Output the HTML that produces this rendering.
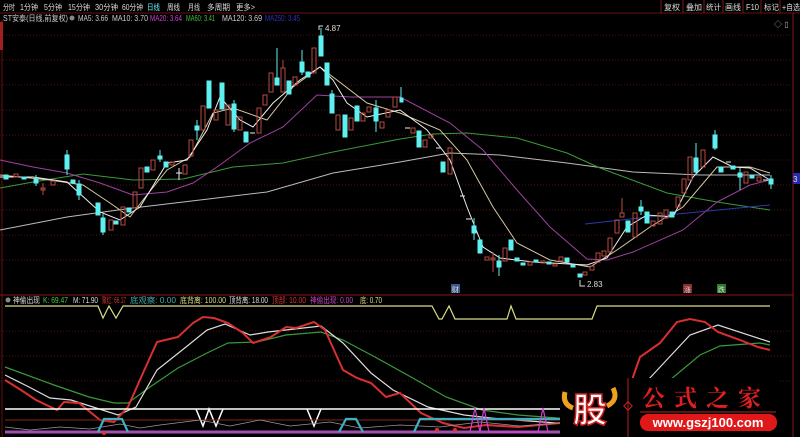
<!DOCTYPE html>
<html><head><meta charset="utf-8"><style>
body{margin:0;background:#000;width:800px;height:437px;overflow:hidden;font-family:"Liberation Sans","Noto Sans CJK SC",sans-serif}
svg{position:absolute;left:0;top:0}
</style></head><body>
<svg width="800" height="437" viewBox="0 0 800 437" xmlns="http://www.w3.org/2000/svg" font-family="Liberation Sans, Noto Sans CJK SC, sans-serif">
<rect width="800" height="437" fill="#000"/>
<!-- top bar -->
<g font-size="8" fill="#ddd" lengthAdjust="spacingAndGlyphs">
<text x="3" y="10" textLength="12" lengthAdjust="spacingAndGlyphs">分时</text>
<text x="20" y="10" textLength="18" lengthAdjust="spacingAndGlyphs">1分钟</text>
<text x="44" y="10" textLength="18" lengthAdjust="spacingAndGlyphs">5分钟</text>
<text x="68" y="10" textLength="22" lengthAdjust="spacingAndGlyphs">15分钟</text>
<text x="95" y="10" textLength="23" lengthAdjust="spacingAndGlyphs">30分钟</text>
<text x="122" y="10" textLength="21" lengthAdjust="spacingAndGlyphs">60分钟</text>
<text x="147" y="10" textLength="13" lengthAdjust="spacingAndGlyphs" fill="#6ee">日线</text>
<text x="167" y="10" textLength="13" lengthAdjust="spacingAndGlyphs">周线</text>
<text x="188" y="10" textLength="12" lengthAdjust="spacingAndGlyphs">月线</text>
<text x="207" y="10" textLength="23" lengthAdjust="spacingAndGlyphs">多周期</text>
<text x="236" y="10" textLength="19" lengthAdjust="spacingAndGlyphs">更多&gt;</text>
</g>
<line x1="0" y1="13" x2="800" y2="13" stroke="#6a1010"/>
<g stroke="#7a1a1a" fill="none">
<line x1="661" y1="0" x2="661" y2="13"/><line x1="683" y1="0" x2="683" y2="13"/><line x1="704" y1="0" x2="704" y2="13"/><line x1="723" y1="0" x2="723" y2="13"/><line x1="743" y1="0" x2="743" y2="13"/><line x1="761" y1="0" x2="761" y2="13"/><line x1="780" y1="0" x2="780" y2="13"/>
</g>
<g font-size="8" fill="#ddd">
<text x="664" y="10" textLength="16" lengthAdjust="spacingAndGlyphs">复权</text>
<text x="686" y="10" textLength="16" lengthAdjust="spacingAndGlyphs">叠加</text>
<text x="706" y="10" textLength="15" lengthAdjust="spacingAndGlyphs">统计</text>
<text x="725" y="10" textLength="16" lengthAdjust="spacingAndGlyphs">画线</text>
<text x="746" y="10" textLength="13" lengthAdjust="spacingAndGlyphs">F10</text>
<text x="764" y="10" textLength="15" lengthAdjust="spacingAndGlyphs">标记</text>
<text x="782" y="10" textLength="18" lengthAdjust="spacingAndGlyphs">+自选</text>
</g>
<!-- legend -->
<g font-size="8" fill="#ccc">
<text x="3" y="21" textLength="65" lengthAdjust="spacingAndGlyphs">ST安泰(日线,前复权)</text>
<circle cx="72" cy="18" r="2.5" fill="#888"/>
<text x="78" y="21" textLength="30" lengthAdjust="spacingAndGlyphs">MA5: 3.66</text>
<text x="112" y="21" textLength="36" lengthAdjust="spacingAndGlyphs">MA10: 3.70</text>
<text x="150" y="21" textLength="32" lengthAdjust="spacingAndGlyphs" fill="#d040d0">MA20: 3.64</text>
<text x="186" y="21" textLength="29" lengthAdjust="spacingAndGlyphs" fill="#40c040">MA60: 3.41</text>
<text x="222" y="21" textLength="40" lengthAdjust="spacingAndGlyphs">MA120: 3.69</text>
<text x="265" y="21" textLength="35" lengthAdjust="spacingAndGlyphs" fill="#3030c0">MA250: 3.45</text>
</g>
<!-- grid -->
<g stroke="#4a1010" stroke-dasharray="1 2">
<line x1="0" y1="35" x2="792" y2="35"/><line x1="0" y1="60" x2="792" y2="60"/><line x1="0" y1="85" x2="792" y2="85"/><line x1="0" y1="110" x2="792" y2="110"/><line x1="0" y1="135" x2="792" y2="135"/><line x1="0" y1="160" x2="792" y2="160"/><line x1="0" y1="185" x2="792" y2="185"/><line x1="0" y1="210" x2="792" y2="210"/><line x1="0" y1="235" x2="792" y2="235"/><line x1="0" y1="260" x2="792" y2="260"/>
<line x1="0" y1="331" x2="792" y2="331"/><line x1="0" y1="356" x2="792" y2="356"/><line x1="0" y1="381" x2="792" y2="381"/>
</g>
<line x1="793" y1="13" x2="793" y2="437" stroke="#8a1515"/>
<line x1="2" y1="20" x2="2" y2="437" stroke="#6a1010"/>
<rect x="0" y="22" width="3" height="28" fill="#a02020"/>
<line x1="0" y1="295" x2="793" y2="295" stroke="#8a1515"/>
<!-- MA lines -->
<g fill="none" stroke-width="1">
<polyline stroke="#bbb" points="0,230 67,217 133,208 200,200 267,192 333,173 400,162 450,153 500,155 567,163 633,172 700,175 770,175"/>
<polyline stroke="#3a9a3a" points="0,188 33,182 83,174 133,180 183,179 233,167 283,163 333,152 400,139 433,134 467,133 517,138 567,153 600,168 667,193 717,202 770,210"/>
<polyline stroke="#a040a0" points="0,160 33,167 67,173 100,183 133,195 167,192 193,183 217,167 250,143 283,127 317,95 350,97 400,97 450,123 483,150 517,190 550,227 587,259 607,260 633,252 683,230 717,202 750,185 770,180"/>
<polyline stroke="#2a3ab0" points="585,224 667,215 770,205"/>
<polyline stroke="#d8c8a0" points="0,175 50,180 83,185 110,203 130,217 143,200 167,170 190,157 213,113 233,108 267,120 293,87 320,67 333,77 367,103 400,113 440,130 467,160 493,207 517,243 550,260 590,267 617,250 650,227 683,207 717,167 750,167 770,173"/>
<polyline stroke="#eee" points="0,177 33,177 67,182 100,212 120,220 140,207 167,163 187,160 207,130 220,97 240,120 253,127 273,103 300,80 320,67 333,80 347,103 367,117 400,110 427,130 450,160 467,207 483,247 500,258 533,262 587,265 607,258 627,227 647,215 673,217 693,177 713,157 733,167 750,168 770,180"/>
</g>
<!-- candles cyan -->
<g fill="#5ef0f0" stroke="#5ef0f0">
<rect x="4" y="175" width="4" height="4"/><rect x="22" y="177" width="4" height="2"/><rect x="34" y="179" width="4" height="4"/><line x1="36" y1="175" x2="36" y2="186"/>
<rect x="65" y="155" width="4" height="14"/><line x1="67" y1="150" x2="67" y2="175"/><rect x="71" y="180" width="4" height="3"/><rect x="77" y="184" width="4" height="11"/><line x1="79" y1="180" x2="79" y2="200"/>
<rect x="96" y="203" width="4" height="12"/><rect x="101" y="218" width="4" height="14"/><line x1="103" y1="214" x2="103" y2="235"/><rect x="114" y="221" width="4" height="3"/><rect x="127" y="208" width="4" height="4"/>
<rect x="145" y="167" width="4" height="5"/><rect x="158" y="156" width="4" height="3"/><line x1="160" y1="150" x2="160" y2="162"/><rect x="164" y="162" width="4" height="5"/>
<rect x="195" y="126" width="4" height="4"/><line x1="197" y1="120" x2="197" y2="140"/><rect x="207" y="81" width="4" height="27"/><rect x="220" y="83" width="4" height="26"/><rect x="232" y="104" width="4" height="25"/><line x1="234" y1="100" x2="234" y2="132"/><rect x="244" y="132" width="4" height="10"/>
<rect x="275" y="78" width="4" height="7"/><line x1="277" y1="48" x2="277" y2="78"/><rect x="287" y="81" width="4" height="13"/><rect x="300" y="62" width="4" height="10"/><line x1="302" y1="50" x2="302" y2="75"/><rect x="306" y="72" width="4" height="5"/><rect x="319" y="36" width="4" height="20"/><line x1="321" y1="28" x2="321" y2="36"/>
<rect x="325" y="63" width="4" height="22"/><rect x="330" y="94" width="4" height="19"/><line x1="332" y1="90" x2="332" y2="113"/><rect x="343" y="115" width="4" height="22"/><rect x="355" y="106" width="4" height="15"/><rect x="374" y="108" width="4" height="13"/><line x1="376" y1="100" x2="376" y2="132"/><rect x="400" y="98" width="3" height="4"/><line x1="401" y1="87" x2="401" y2="98"/>
<rect x="417" y="131" width="4" height="16"/><rect x="441" y="162" width="4" height="10"/><rect x="472" y="226" width="4" height="7"/><line x1="474" y1="218" x2="474" y2="240"/><rect x="478" y="240" width="4" height="13"/>
<rect x="497" y="261" width="4" height="6"/><line x1="499" y1="255" x2="499" y2="276"/><rect x="509" y="240" width="4" height="10"/><rect x="515" y="258" width="4" height="3"/><rect x="521" y="263" width="4" height="2"/><rect x="534" y="260" width="4" height="2"/><rect x="547" y="262" width="4" height="2"/><rect x="565" y="258" width="4" height="4"/><rect x="571" y="265" width="4" height="2"/><rect x="578" y="274" width="4" height="3"/>
<rect x="626" y="221" width="4" height="11"/><rect x="639" y="207" width="4" height="4"/><line x1="641" y1="200" x2="641" y2="215"/><rect x="645" y="212" width="4" height="11"/><rect x="670" y="212" width="4" height="5"/><rect x="694" y="158" width="4" height="14"/><line x1="696" y1="143" x2="696" y2="175"/><rect x="713" y="135" width="4" height="13"/><line x1="715" y1="130" x2="715" y2="150"/><rect x="719" y="167" width="4" height="5"/><rect x="731" y="166" width="4" height="3"/><rect x="738" y="173" width="4" height="4"/><line x1="740" y1="168" x2="740" y2="190"/><rect x="750" y="175" width="4" height="3"/><rect x="769" y="179" width="4" height="5"/><line x1="771" y1="175" x2="771" y2="189"/>
</g>
<!-- candles red hollow -->
<g fill="none" stroke="#b84a40">
<rect x="14" y="174" width="4" height="3"/><rect x="41" y="188" width="4" height="2"/><line x1="43" y1="183" x2="43" y2="195"/><rect x="51" y="181" width="4" height="4"/><rect x="109" y="220" width="4" height="10"/><rect x="121" y="207" width="4" height="18"/><rect x="133" y="192" width="4" height="16"/><rect x="139" y="168" width="4" height="20"/><rect x="151" y="160" width="4" height="10"/><rect x="170" y="162" width="4" height="3"/><rect x="183" y="165" width="4" height="9"/>
<rect x="189" y="140" width="4" height="16"/><rect x="201" y="106" width="4" height="24"/><rect x="214" y="110" width="4" height="10"/><rect x="226" y="105" width="4" height="20"/><rect x="238" y="117" width="4" height="13"/><rect x="257" y="108" width="4" height="25"/><rect x="263" y="95" width="4" height="10"/><rect x="269" y="73" width="4" height="19"/><rect x="281" y="68" width="4" height="24"/><line x1="283" y1="60" x2="283" y2="68"/><rect x="293" y="77" width="4" height="8"/><rect x="312" y="48" width="4" height="25"/>
<rect x="336" y="115" width="4" height="15"/><rect x="349" y="118" width="4" height="12"/><rect x="361" y="113" width="4" height="8"/><rect x="367" y="107" width="4" height="5"/><rect x="380" y="122" width="4" height="6"/><rect x="386" y="110" width="4" height="7"/><rect x="393" y="97" width="4" height="10"/><rect x="411" y="128" width="4" height="5"/><rect x="423" y="140" width="4" height="7"/><rect x="429" y="135" width="4" height="3"/><rect x="448" y="148" width="4" height="26"/>
<rect x="485" y="257" width="4" height="3"/><rect x="491" y="258" width="4" height="2"/><line x1="493" y1="252" x2="493" y2="272"/><rect x="503" y="248" width="4" height="13"/><rect x="528" y="262" width="4" height="3"/><rect x="541" y="261" width="4" height="2"/><rect x="553" y="264" width="4" height="2"/><rect x="559" y="257" width="4" height="4"/><rect x="583" y="272" width="4" height="3"/><rect x="590" y="266" width="4" height="4"/><rect x="596" y="253" width="4" height="9"/><rect x="602" y="251" width="4" height="5"/><rect x="608" y="238" width="4" height="14"/><rect x="615" y="220" width="4" height="13"/><rect x="620" y="213" width="4" height="4"/><line x1="622" y1="198" x2="622" y2="213"/><rect x="633" y="213" width="4" height="24"/><rect x="651" y="221" width="4" height="5"/><rect x="658" y="213" width="4" height="11"/><rect x="664" y="210" width="4" height="8"/><rect x="676" y="197" width="4" height="10"/><rect x="682" y="179" width="4" height="14"/><rect x="688" y="157" width="4" height="23"/><rect x="701" y="150" width="4" height="17"/><rect x="744" y="172" width="4" height="11"/><rect x="757" y="177" width="4" height="4"/>
</g>
<g stroke="#eee"><line x1="176" y1="173" x2="182" y2="173"/><line x1="179" y1="168" x2="179" y2="180"/><line x1="250" y1="133" x2="255" y2="133"/><line x1="405" y1="128" x2="410" y2="128"/><line x1="436" y1="148" x2="441" y2="148"/><line x1="460" y1="196" x2="465" y2="196"/><line x1="466" y1="219" x2="471" y2="219"/><line x1="726" y1="162" x2="731" y2="162"/><line x1="763" y1="180" x2="768" y2="180"/></g>
<g font-size="8" fill="#ddd"><text x="325" y="31">4.87</text><path d="M319 30 v-4 h4" stroke="#ddd" fill="none"/><text x="587" y="287">2.83</text><path d="M580 280 v6 h5" stroke="#ddd" fill="none"/></g>
<rect x="793" y="173" width="7" height="11" fill="#2a2ab0"/><text x="793" y="182" font-size="8" fill="#ddd">3</text>
<rect x="451" y="284" width="9" height="9" fill="#3a5a8a"/><text x="452" y="292" font-size="7" fill="#ddd">财</text>
<rect x="683" y="284" width="9" height="9" fill="#8a2a2a"/><text x="684" y="292" font-size="7" fill="#ddd">涨</text>
<rect x="717" y="284" width="9" height="9" fill="#2a7a2a"/><text x="718" y="292" font-size="7" fill="#ddd">跌</text>
<text x="774" y="27" font-size="8" fill="#aaa">◇ ▯</text>
<!-- indicator legend -->
<g font-size="8">
<circle cx="8" cy="300" r="2.5" fill="#888"/>
<text x="13" y="303" fill="#ddd" textLength="27" lengthAdjust="spacingAndGlyphs">神偷出现</text>
<text x="43" y="303" fill="#4c4" textLength="25" lengthAdjust="spacingAndGlyphs">K: 69.47</text>
<text x="73" y="303" fill="#ddd" textLength="25" lengthAdjust="spacingAndGlyphs">M: 71.90</text>
<text x="102" y="303" fill="#d33" textLength="24" lengthAdjust="spacingAndGlyphs">聚红: 66.17</text>
<text x="130" y="303" fill="#4aa" textLength="46" lengthAdjust="spacingAndGlyphs">底观察: 0.00</text>
<text x="180" y="303" fill="#dd8" textLength="46" lengthAdjust="spacingAndGlyphs">底背离: 100.00</text>
<text x="229" y="303" fill="#ddd" textLength="39" lengthAdjust="spacingAndGlyphs">顶背离: 18.00</text>
<text x="272" y="303" fill="#d33" textLength="34" lengthAdjust="spacingAndGlyphs">顶部: 10.00</text>
<text x="310" y="303" fill="#c4c" textLength="43" lengthAdjust="spacingAndGlyphs">神偷出现: 0.00</text>
<text x="360" y="303" fill="#dd8" textLength="22" lengthAdjust="spacingAndGlyphs">底: 0.70</text>
</g>
<!-- indicator lines -->
<g fill="none" stroke-width="1.2">
<polyline stroke="#dddd88" points="5,306 98,306 103,318 109,306 116,318 123,306 432,306 439,319 442,319 449,306 455,319 507,319 511,306 516,319 592,319 597,306 770,306"/>
<polyline stroke="#3a9a3a" points="5,367 54,385 89,397 114,403 128,403 150,387 178,368 207,353 228,343 257,342 286,335 321,332 343,340 375,357 411,377 446,397 482,410 518,415 557,418 600,420 640,392 670,380 700,355 720,346 760,343 770,345"/>
<polyline stroke="#ddd" points="5,375 29,387 50,398 71,400 93,407 118,415 136,407 157,370 186,347 207,330 225,324 250,335 268,332 321,326 343,343 371,373 393,390 428,407 464,415 500,419 557,423 600,421 648,380 690,335 718,325 770,342"/>
<polyline stroke="#d83030" stroke-width="2" points="5,380 21,390 36,400 57,410 64,402 79,403 100,420 114,422 128,407 143,373 157,342 178,337 193,323 203,317 214,318 228,323 243,333 253,343 271,337 286,327 296,328 314,322 325,330 343,370 357,378 371,383 386,397 400,393 421,413 443,423 464,428 486,425 518,427 560,423 600,425 625,400 640,357 660,343 677,322 690,319 705,322 718,332 740,340 758,347 770,350"/>
</g>
<line x1="5" y1="409" x2="770" y2="409" stroke="#fff" stroke-width="1.5"/>
<polyline fill="none" stroke="#fff" stroke-width="1.5" points="196,409 203,426 209,409 216,426 223,409"/>
<polyline fill="none" stroke="#fff" stroke-width="1.5" points="307,409 314,426 321,409"/>
<line x1="5" y1="420" x2="770" y2="420" stroke="#8a2020"/>
<polyline fill="none" stroke="#999" stroke-width="0.7" points="5,427 30,430 60,427 90,429 120,424 140,428 160,425 200,420 230,426 260,420 290,426 330,422 360,428 400,425 440,427 480,422 520,426 560,423"/>
<line x1="5" y1="432" x2="560" y2="432" stroke="#a050b0" stroke-width="3"/>
<polyline fill="none" stroke="#40b0c0" stroke-width="2.2" points="98,432 104,419 122,419 128,432"/>
<polyline fill="none" stroke="#40b0c0" stroke-width="2.2" points="339,432 346,419 356,419 363,432"/>
<polyline fill="none" stroke="#40b0c0" stroke-width="2.2" points="414,432 420,419 560,419"/>
<polyline fill="none" stroke="#d040d0" stroke-width="1.2" points="470,432 475,408 480,432 484,408 489,432 538,432 543,408 548,432"/>
<circle cx="104" cy="433" r="2" fill="#d33"/><circle cx="437" cy="430" r="2" fill="#d33"/><circle cx="455" cy="430" r="2" fill="#d33"/>
<!-- logo -->
<rect x="560" y="378" width="220" height="59" fill="#000"/>
<path d="M565 392 q-3 12 8 16 M613 388 q6 12 -6 18" stroke="#f0a020" stroke-width="5" fill="none"/>
<text x="573" y="422" font-size="34" font-weight="bold" fill="#fff" stroke="#d02020" stroke-width="1.5" font-family="Noto Sans CJK SC, sans-serif">股</text>
<line x1="628" y1="378" x2="628" y2="437" stroke="#b02020"/>
<rect x="625" y="403" width="6" height="6" transform="rotate(45 628 406)" fill="none" stroke="#d02020"/>
<text x="642" y="406" font-size="23" font-weight="bold" fill="#e02020" letter-spacing="9" font-family="Noto Serif CJK SC, serif">公式之家</text>
<line x1="640" y1="412" x2="776" y2="412" stroke="#c02020"/>
<rect x="640" y="414" width="137" height="17" rx="8" fill="#e01818"/>
<text x="708" y="427" font-size="13" font-weight="bold" fill="#fff" text-anchor="middle">www.gszj100.com</text>
</svg>
</body></html>
